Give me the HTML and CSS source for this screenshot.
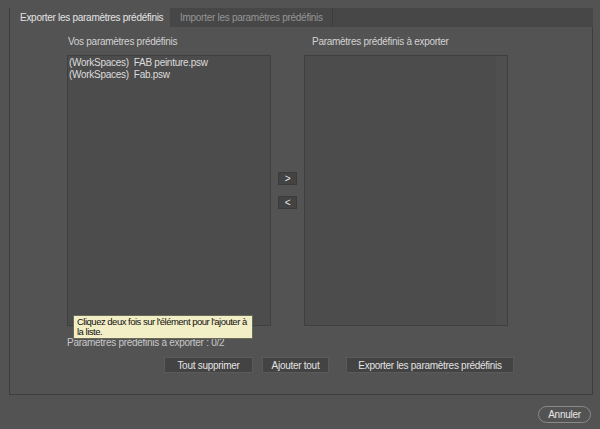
FILE: index.html
```html
<!DOCTYPE html>
<html lang="fr">
<head>
<meta charset="utf-8">
<link rel="stylesheet" href="styles.css">
</head>
<body>
<div class="window">
  <div class="tabs">
    <div class="tab active">Exporter les paramètres prédéfinis</div>
    <div class="tab inactive">Importer les paramètres prédéfinis</div>
  </div>
  <div class="panel">
    <div class="columns">
      <div class="col">
        <div class="label">Vos paramètres prédéfinis</div>
        <div class="listbox">
          <div class="item">(WorkSpaces)&nbsp; FAB peinture.psw</div>
          <div class="item">(WorkSpaces)&nbsp; Fab.psw</div>
        </div>
      </div>
      <div class="arrows">
        <div class="arrow">&gt;</div>
        <div class="arrow">&lt;</div>
      </div>
      <div class="col">
        <div class="label right-label">Paramètres prédéfinis à exporter</div>
        <div class="listbox">
          <div class="track"></div>
        </div>
      </div>
    </div>
    <div class="count">Paramètres prédéfinis à exporter : 0/2</div>
    <div class="actions">
      <div class="btn">Tout supprimer</div>
      <div class="btn">Ajouter tout</div>
      <div class="btn">Exporter les paramètres prédéfinis</div>
    </div>
    <div class="tooltip">Cliquez deux fois sur l'élément pour l'ajouter à<br>la liste.</div>
  </div>
  <div class="footer">
    <div class="cancel">Annuler</div>
  </div>
</div>
</body>
</html>
```
FILE: styles.css
```css
* { box-sizing: border-box; }
html, body { margin: 0; padding: 0; }
body {
  background: #535353;
  font-family: "Liberation Sans", Arial, sans-serif;
  font-size: 10px;
  letter-spacing: -0.28px;
  color: #d6d6d6;
  width: 600px;
  height: 429px;
  overflow: hidden;
  white-space: nowrap;
}
.window {
  padding: 8px 7px 0 9px;
}
.tabs {
  display: flex;
  height: 19px;
  background: #474747;
}
.tab {
  display: flex;
  align-items: center;
  padding-left: 10px;
}
.tab.active {
  width: 161px;
  background: #535353;
  color: #e4e4e4;
  border-left: 1px solid #3d3d3d;
}
.tab.inactive {
  width: 163px;
  color: #959595;
  border-right: 1px solid #3d3d3d;
}
.panel {
  position: relative;
  height: 368px;
  border: 1px solid #3d3d3d;
  border-top: none;
  background: #535353;
}
.columns {
  display: flex;
  padding-left: 57px;
  padding-top: 9px;
}
.col {
  display: flex;
  flex-direction: column;
  width: 204px;
}
.label {
  height: 19px;
  padding-left: 1px;
  line-height: 12px;
  color: #d2d2d2;
}
.right-label { padding-left: 8px; }
.listbox {
  position: relative;
  height: 271px;
  background: #4c4c4c;
  border: 1px solid #3f3f3f;
  padding: 1px 0 0 1px;
}
.item {
  line-height: 12px;
  color: #dcdcdc;
}
.track {
  position: absolute;
  right: 0;
  top: 0;
  bottom: 0;
  width: 11px;
  background: #4f4f4f;
}
.arrows {
  display: flex;
  flex-direction: column;
  gap: 11px;
  width: 33px;
  padding-top: 136px;
  padding-left: 7px;
}
.arrow {
  width: 19px;
  height: 13px;
  background: #434343;
  border: 1px solid #3b3b3b;
  color: #e6e6e6;
  font-size: 10px;
  display: flex;
  align-items: center;
  justify-content: center;
}
.count {
  padding-left: 57px;
  margin-top: 11px;
  line-height: 12px;
  color: #c8c8c8;
}
.actions {
  display: flex;
  gap: 9px;
  padding-left: 154px;
  margin-top: 8px;
}
.btn {
  height: 16px;
  background: #434343;
  border: 1px solid #5a5a5a;
  color: #e2e2e2;
  display: flex;
  align-items: center;
  justify-content: center;
}
.btn:nth-child(1) { width: 89px; }
.btn:nth-child(2) { width: 67px; }
.btn:nth-child(3) { width: 168px; margin-left: 8px; }
.tooltip {
  position: absolute;
  left: 63px;
  top: 288px;
  width: 180px;
  padding: 1px 2px 1px 3px;
  background: #f2eec5;
  border: 1px solid #6a6a5a;
  color: #111;
  font-size: 9.5px;
  letter-spacing: -0.5px;
  line-height: 10px;
}
.footer {
  display: flex;
  justify-content: flex-end;
  padding-top: 11px;
  padding-right: 2px;
}
.cancel {
  width: 53px;
  height: 17px;
  border: 1px solid #8a8a8a;
  border-radius: 9px;
  color: #e6e6e6;
  display: flex;
  align-items: center;
  justify-content: center;
}
```
